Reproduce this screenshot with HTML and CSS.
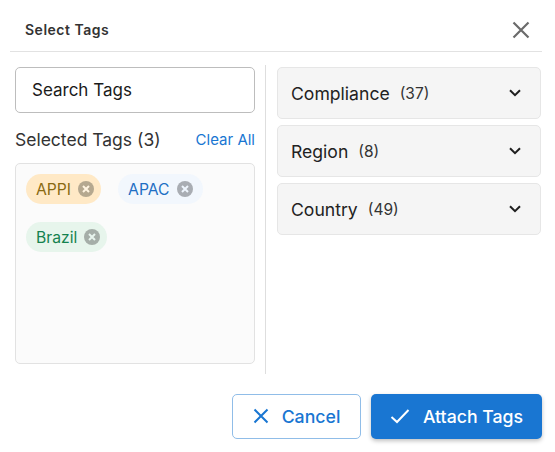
FILE: index.html
```html
<!DOCTYPE html>
<html lang="en">
<head>
  <meta charset="UTF-8">
  <title>Select Tags</title>
  <link rel="stylesheet" href="styles.css">
</head>
<body>
  <main class="dialog">
    <header class="header">
      <h2 class="title">Select Tags</h2>
      <button class="close-button" aria-label="Close">
        <svg width="18" height="18" viewBox="0 0 18 18"><path d="M1.5 1.5L16.5 16.5M16.5 1.5L1.5 16.5" stroke="#6b6b6b" stroke-width="2.2" fill="none"/></svg>
      </button>
    </header>

    <div class="content">
      <section class="left">
        <div class="search">Search Tags</div>
        <div class="selected-head">
          <span class="selected-title">Selected Tags (3)</span>
          <a class="clear-all">Clear All</a>
        </div>
        <div class="tag-box">
          <span class="tag tag-orange">APPI
            <svg class="tag-x" viewBox="0 0 16 16"><circle cx="8" cy="8" r="8" fill="#b5a88f"/><path d="M5 5L11 11M11 5L5 11" stroke="#fff4e0" stroke-width="2"/></svg>
          </span>
          <span class="tag tag-blue">APAC
            <svg class="tag-x" viewBox="0 0 16 16"><circle cx="8" cy="8" r="8" fill="#a9adb3"/><path d="M5 5L11 11M11 5L5 11" stroke="#eef5fd" stroke-width="2"/></svg>
          </span>
          <span class="tag tag-green">Brazil
            <svg class="tag-x" viewBox="0 0 16 16"><circle cx="8" cy="8" r="8" fill="#a5aea8"/><path d="M5 5L11 11M11 5L5 11" stroke="#e8f5ee" stroke-width="2"/></svg>
          </span>
        </div>
      </section>

      <section class="right">
        <div class="accordion">
          <span class="acc-name">Compliance</span><span class="acc-count">(37)</span>
          <svg class="chevron" width="12" height="8" viewBox="0 0 12 8"><path d="M1 1.2L6 6.2L11 1.2" stroke="#1f1f1f" stroke-width="2" fill="none"/></svg>
        </div>
        <div class="accordion">
          <span class="acc-name">Region</span><span class="acc-count">(8)</span>
          <svg class="chevron" width="12" height="8" viewBox="0 0 12 8"><path d="M1 1.2L6 6.2L11 1.2" stroke="#1f1f1f" stroke-width="2" fill="none"/></svg>
        </div>
        <div class="accordion">
          <span class="acc-name">Country</span><span class="acc-count">(49)</span>
          <svg class="chevron" width="12" height="8" viewBox="0 0 12 8"><path d="M1 1.2L6 6.2L11 1.2" stroke="#1f1f1f" stroke-width="2" fill="none"/></svg>
        </div>
      </section>
    </div>

    <footer class="footer">
      <button class="btn btn-cancel">
        <svg width="16" height="16" viewBox="0 0 16 16"><path d="M1.5 1.5L14.5 14.5M14.5 1.5L1.5 14.5" stroke="#1976d2" stroke-width="2" fill="none"/></svg>
        Cancel
      </button>
      <button class="btn btn-attach">
        <svg width="20" height="16" viewBox="0 0 20 16"><path d="M1.5 9L7 14L18.5 2" stroke="#fff" stroke-width="2" fill="none"/></svg>
        Attach Tags
      </button>
    </footer>
  </main>
</body>
</html>
```

FILE: styles.css
```css
* {
  box-sizing: border-box;
}

body {
  margin: 0;
  background: #fff;
  font-family: Inter, "Noto Sans", Arial, sans-serif;
  color: #1f1f1f;
}

.dialog {
  width: 555px;
  height: 452px;
  padding: 0 13px 0 10px;
  overflow: hidden;
}

.header {
  display: flex;
  align-items: center;
  justify-content: space-between;
  height: 52px;
  padding: 8px 12px 0 15px;
  border-bottom: 1px solid #e2e2e2;
}

.title {
  margin: 0;
  font-size: 14px;
  font-weight: 600;
  letter-spacing: 0.5px;
  color: #333;
}

.close-button {
  display: flex;
  padding: 0;
  border: none;
  background: none;
}

.content {
  display: flex;
  height: 309px;
  margin-top: 13px;
}

.left {
  width: 256px;
  padding: 2px 10px 0 5px;
  border-right: 1px solid #dedede;
}

.search {
  display: flex;
  align-items: center;
  height: 46px;
  padding-left: 16px;
  border: 1px solid #bdbdbd;
  border-radius: 5px;
  font-size: 17px;
  color: #1a1a1a;
}

.selected-head {
  display: flex;
  align-items: center;
  justify-content: space-between;
  height: 24px;
  margin-top: 14px;
}

.selected-title {
  font-size: 17.5px;
  color: #333;
}

.clear-all {
  font-size: 15px;
  color: #1976d2;
}

.tag-box {
  display: flex;
  flex-wrap: wrap;
  align-content: flex-start;
  gap: 18px 17px;
  height: 201px;
  margin-top: 12px;
  padding: 10px 10px;
  border: 1px solid #e2e2e2;
  border-radius: 5px;
  background: #fbfbfb;
}

.tag {
  display: inline-flex;
  align-items: center;
  gap: 7px;
  height: 30px;
  padding: 0 7px 0 10px;
  border-radius: 15px;
  font-size: 15.7px;
}

.tag-x {
  width: 16px;
  height: 16px;
}

.tag-orange {
  background: #ffe9c6;
  color: #8a6a12;
}

.tag-blue {
  padding-right: 10px;
  background: #f2f7fd;
  color: #1f6fc4;
}

.tag-green {
  background: #e7f5ec;
  color: #14824f;
}

.right {
  flex: 1;
  display: flex;
  flex-direction: column;
  gap: 6px;
  padding: 2px 1px 0 11px;
}

.accordion {
  display: flex;
  align-items: center;
  height: 52px;
  padding: 0 19px 0 13px;
  border: 1px solid #e6e6e6;
  border-radius: 5px;
  background: #f5f5f5;
}

.acc-name {
  font-size: 17.6px;
  color: #222;
}

.acc-count {
  margin-left: 10px;
  font-size: 15.5px;
  color: #333;
}

.chevron {
  margin-left: auto;
}

.footer {
  display: flex;
  justify-content: flex-end;
  gap: 10px;
  margin-top: 20px;
}

.btn {
  display: inline-flex;
  align-items: center;
  justify-content: center;
  gap: 13px;
  height: 45px;
  padding: 0 0 1px;
  border-radius: 5px;
  font-family: inherit;
  font-size: 17.7px;
  font-weight: 500;
}

.btn-cancel {
  width: 129px;
  border: 1px solid #90bde8;
  background: #fff;
  color: #1976d2;
}

.btn-attach {
  width: 171px;
  border: none;
  background: #1976d2;
  color: #fff;
  box-shadow: 0 2px 4px rgba(0, 0, 0, 0.25);
}
```
